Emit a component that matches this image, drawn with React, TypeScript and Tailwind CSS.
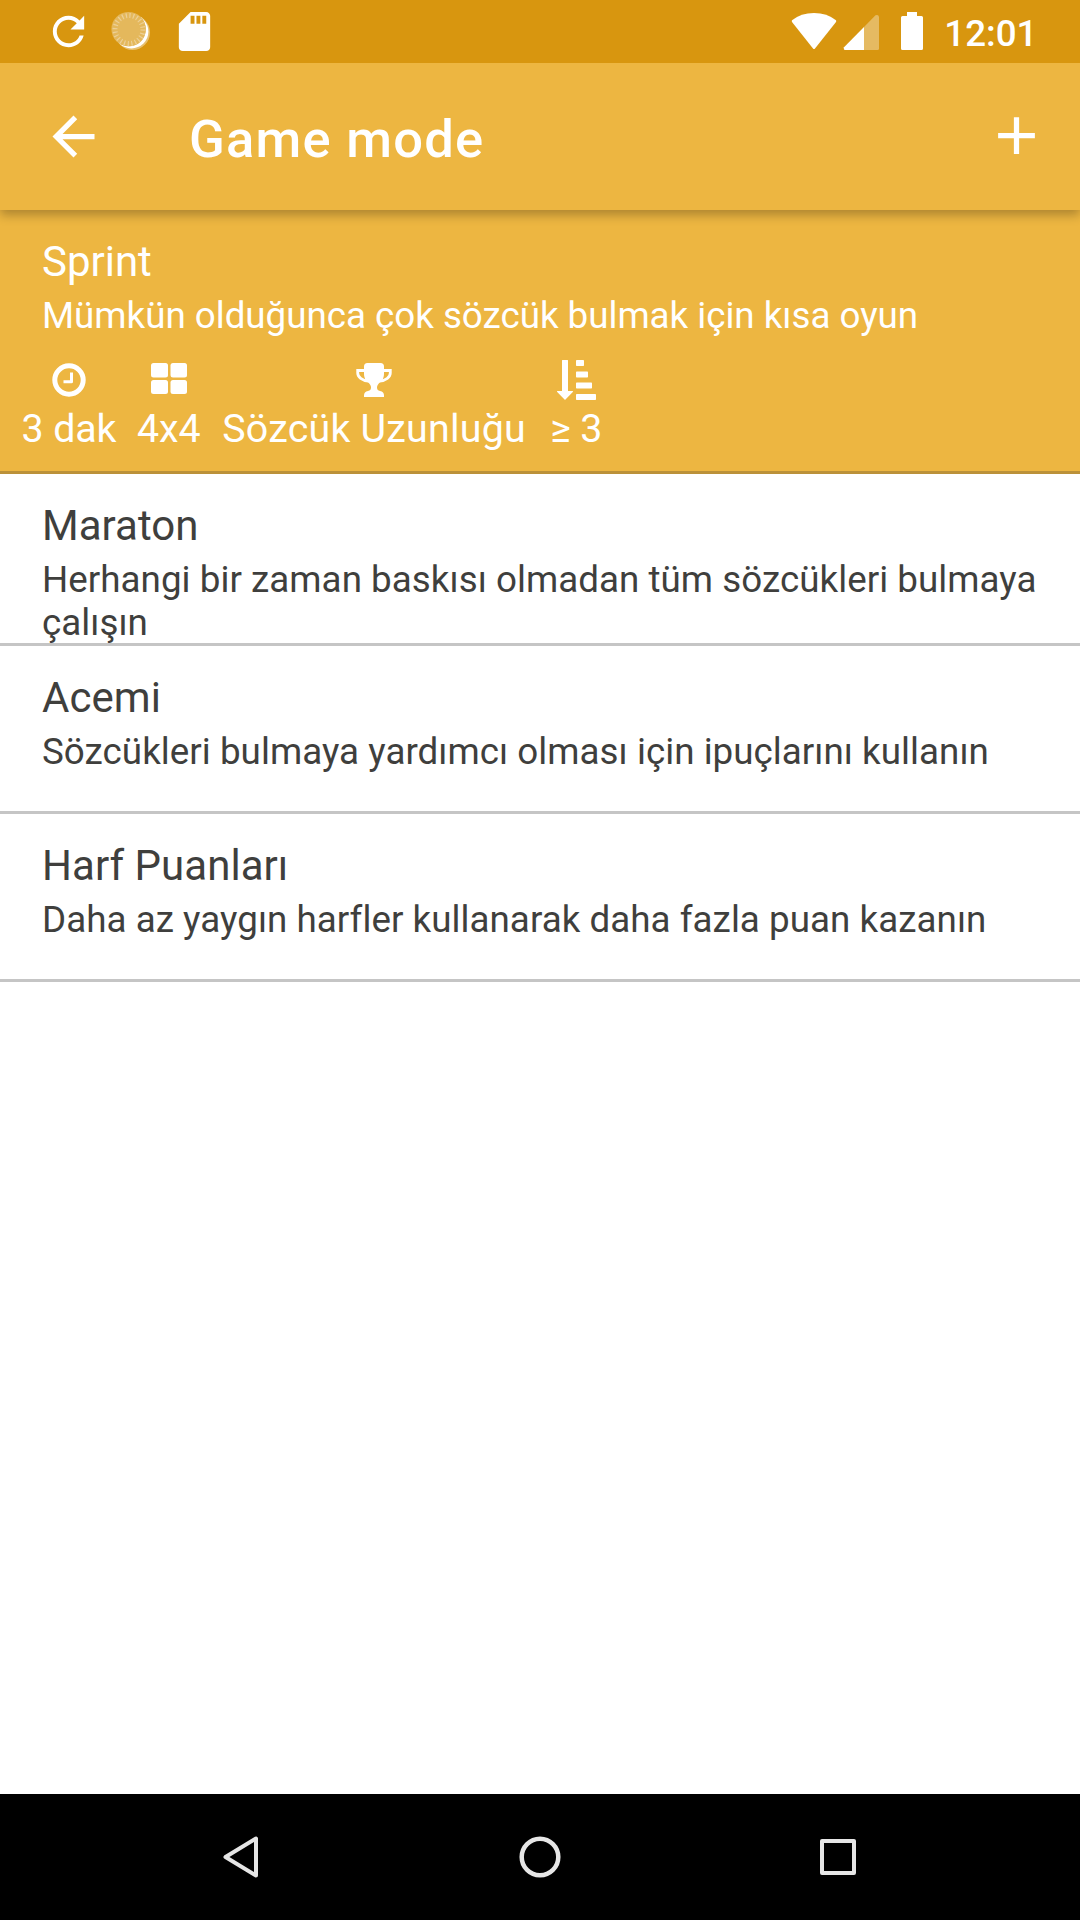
import React from "react";

const refreshPath =
  "M17.65 6.35C16.2 4.9 14.21 4 12 4c-4.42 0-7.99 3.58-7.99 8s3.57 8 7.99 8c3.73 0 6.84-2.55 7.73-6h-2.08c-.82 2.33-3.04 4-5.65 4-3.31 0-6-2.69-6-6s2.69-6 6-6c1.66 0 3.14.69 4.22 1.78L13 11h7V4l-2.35 2.35z";
const sdPath =
  "M18 2h-8L4.02 8 4 20c0 1.1.9 2 2 2h12c1.1 0 2-.9 2-2V4c0-1.1-.9-2-2-2zm-6 6h-2V4h2v4zm3 0h-2V4h2v4zm3 0h-2V4h2v4z";

function StatusBar() {
  return (
    <div className="relative z-20 flex h-[63px] bg-[#d8960f] text-white">
      <svg className="ml-[45px] mt-2 h-[47px] w-[47px] shrink-0" viewBox="0 0 24 24" fill="currentColor">
        <path d={refreshPath} />
      </svg>
      <svg className="ml-[16px] mt-[8px] h-[48px] w-[48px] shrink-0" viewBox="0 0 48 48">
        <circle cx="24.5" cy="24.5" r="17.5" fill="#fff" fillOpacity="0.4" />
        <circle cx="23.4" cy="23.4" r="17" fill="#fff" />
        <circle cx="21" cy="21.5" r="16.8" fill="#e4b85c" />
        <circle cx="20.6" cy="21.1" r="17.2" fill="#e4b85c" />
        <circle
          cx="21"
          cy="21.5"
          r="14"
          fill="none"
          stroke="#edd096"
          strokeWidth="5"
          strokeDasharray="1.2 2.465"
        />
      </svg>
      <svg className="ml-[15px] mt-[8px] h-[47px] w-[47px] shrink-0" viewBox="0 0 24 24" fill="currentColor">
        <path d={sdPath} />
      </svg>
      <div className="ml-auto flex">
        <svg className="mt-[12px] h-[38px] w-[46px]" viewBox="0 0 46 38" fill="currentColor">
          <path d="M1 8.300Q10 1 23 1Q36 1 45 8.300Q45.500 9 45 10L24 36.500Q23 37.600 22 36.500L1 10Q.5 9 1 8.300Z" />
        </svg>
        <svg className="ml-[6px] mt-[14px] h-[37px] w-[36px]" viewBox="0 0 36 37" fill="currentColor">
          <path d="M36 3Q35.500 0 32.500 1.300L21 13V36H34.500Q36 36 36 34.500Z" opacity="0.35" />
          <path d="M21 13L1 33.300Q.3 36 2 36H21Z" />
        </svg>
        <svg className="ml-[22px] mt-[12px] h-[38px] w-[22px]" viewBox="0 0 22 38" fill="currentColor">
          <path d="M6 0h10v4h4.500Q22 4 22 5.500V36.500Q22 38 20.500 38H1.500Q0 38 0 36.500V5.500Q0 4 1.500 4H6Z" />
        </svg>
        <span className="ml-[21px] mr-[42.5px] mt-[12px] text-[36.75px] font-medium leading-[43px]">12:01</span>
      </div>
    </div>
  );
}

function Toolbar() {
  return (
    <header className="relative z-10 flex h-[147px] items-center bg-[#edb641] text-white shadow-[0_5px_10px_rgba(0,0,0,0.27)]">
      <svg className="ml-[42px] h-[63px] w-[63px]" viewBox="0 0 24 24" fill="currentColor">
        <path d="M20 11H7.830l5.590-5.590L12 4l-8 8 8 8 1.410-1.410L7.830 13H20v-2z" />
      </svg>
      <h1 className="ml-[84px] mt-[4px] text-[52.5px] font-medium leading-[62px] tracking-[1.25px]">Game mode</h1>
      <svg className="ml-auto mr-[32px] h-[63px] w-[63px] -translate-y-[1px]" viewBox="0 0 24 24" fill="currentColor">
        <path d="M19 13h-6v6h-2v-6H5v-2h6V5h2v6h6v2z" />
      </svg>
    </header>
  );
}

function ClockIcon() {
  return (
    <svg className="h-[40px] w-[36px]" viewBox="0 0 36 40" fill="none" stroke="currentColor">
      <circle cx="18" cy="20" r="14.200" strokeWidth="5" />
      <path d="M20.500 12.500V21.700H12.500" strokeWidth="3" strokeLinejoin="round" />
    </svg>
  );
}

function GridIcon() {
  return (
    <svg className="h-[40px] w-[36px]" viewBox="0 0 36 40" fill="currentColor">
      <rect x="0" y="3" width="17" height="14.500" rx="2.500" />
      <rect x="19.500" y="3" width="16.500" height="14.500" rx="2.500" />
      <rect x="0" y="20" width="17" height="14" rx="2.500" />
      <rect x="19.500" y="20" width="16.500" height="14" rx="2.500" />
    </svg>
  );
}

function TrophyIcon() {
  return (
    <svg className="h-[40px] w-[36px]" viewBox="0 0 36 40">
      <path
        d="M9 10.500H1.700V13C1.700 17 6 20.500 12.500 21M27 10.500H34.300V13C34.300 17 30 20.500 23.500 21"
        fill="none"
        stroke="currentColor"
        strokeWidth="2.800"
      />
      <path
        d="M11.500 3H24.500Q28 3 28 6.500V14Q28 19 24.500 22Q21 24.500 21 27.500Q21 30.500 24 31Q28 31.500 28 35.500V37H8V35.500Q8 31.500 12 31Q15 30.500 15 27.500Q15 24.500 11.500 22Q8 19 8 14V6.500Q8 3 11.500 3Z"
        fill="currentColor"
      />
    </svg>
  );
}

function SortIcon() {
  return (
    <svg className="h-[40px] w-[39px]" viewBox="0 0 39 40" fill="currentColor">
      <path d="M5 .5Q5 0 5.500 0H10.500Q11 0 11 .5V31H15.500Q16.500 31 15.800 32L8.500 39.600Q8 40 7.500 39.600L.2 32Q-.5 31 .5 31H5Z" />
      <rect x="19" y="0" width="8" height="6" rx=".7" />
      <rect x="19" y="11.500" width="12" height="6" rx=".7" />
      <rect x="19" y="22.500" width="16" height="6" rx=".7" />
      <rect x="19" y="34" width="20" height="6" rx=".7" />
    </svg>
  );
}

function Stat({ icon, label, className }: { icon: React.ReactNode; label: string; className: string }) {
  return (
    <div className={`flex flex-col items-center ${className}`}>
      {icon}
      <span className="mt-[6px] whitespace-nowrap text-[39.375px] leading-[46px]">{label}</span>
    </div>
  );
}

function ModeText({ title, text }: { title: string; text: string }) {
  return (
    <>
      <h2 className="text-[42px] leading-[49px]">{title}</h2>
      <p className="mt-[8px] text-[36.75px] leading-[43px]">{text}</p>
    </>
  );
}

function ModeRow({ title, text, className }: { title: string; text: string; className: string }) {
  return (
    <section
      className={`border-b-[3px] border-[#c5c5c5] pl-[42px] pr-[38px] pt-[27px] tracking-[0.04px] text-[#3f3f3d] ${className}`}
    >
      <ModeText title={title} text={text} />
    </section>
  );
}

export default function App() {
  return (
    <div className="flex h-[1920px] w-[1080px] flex-col overflow-hidden bg-white font-['Roboto',sans-serif]">
      <StatusBar />
      <Toolbar />
      <main className="flex-1">
        <section className="h-[264px] border-b-[3px] border-[#bb9139] bg-[#edb641] pt-[27px] text-white">
          <div className="px-[42px] tracking-[-0.015px]">
            <ModeText title="Sprint" text="Mümkün olduğunca çok sözcük bulmak için kısa oyun" />
          </div>
          <div className="mt-[23px] flex pl-[21.5px]">
            <Stat icon={<ClockIcon />} label="3 dak" className="mr-[20.5px] tracking-[-0.1px]" />
            <Stat icon={<GridIcon />} label="4x4" className="mr-[21.5px]" />
            <Stat icon={<TrophyIcon />} label="Sözcük Uzunluğu" className="mr-[24px] tracking-[0.23px]" />
            <Stat icon={<SortIcon />} label="≥ 3" className="" />
          </div>
        </section>
        <ModeRow
          title="Maraton"
          text="Herhangi bir zaman baskısı olmadan tüm sözcükleri bulmaya çalışın"
          className="h-[172px]"
        />
        <ModeRow title="Acemi" text="Sözcükleri bulmaya yardımcı olması için ipuçlarını kullanın" className="h-[168px]" />
        <ModeRow title="Harf Puanları" text="Daha az yaygın harfler kullanarak daha fazla puan kazanın" className="h-[168px]" />
      </main>
      <nav className="flex h-[126px] items-center bg-black pl-[210px]">
        <svg className="h-[60px] w-[60px]" viewBox="0 0 60 60" fill="none" stroke="#e6e6e6" strokeWidth="4" strokeLinejoin="round">
          <path d="M46 11.500V48.500L15.500 30Z" />
        </svg>
        <svg className="ml-[240px] h-[60px] w-[60px]" viewBox="0 0 60 60" fill="none" stroke="#e6e6e6" strokeWidth="4.500">
          <circle cx="30" cy="30" r="18.300" />
        </svg>
        <svg className="ml-[238px] h-[60px] w-[60px]" viewBox="0 0 60 60" fill="none" stroke="#e6e6e6" strokeWidth="4" strokeLinejoin="round">
          <rect x="14" y="14" width="32" height="32" />
        </svg>
      </nav>
    </div>
  );
}
